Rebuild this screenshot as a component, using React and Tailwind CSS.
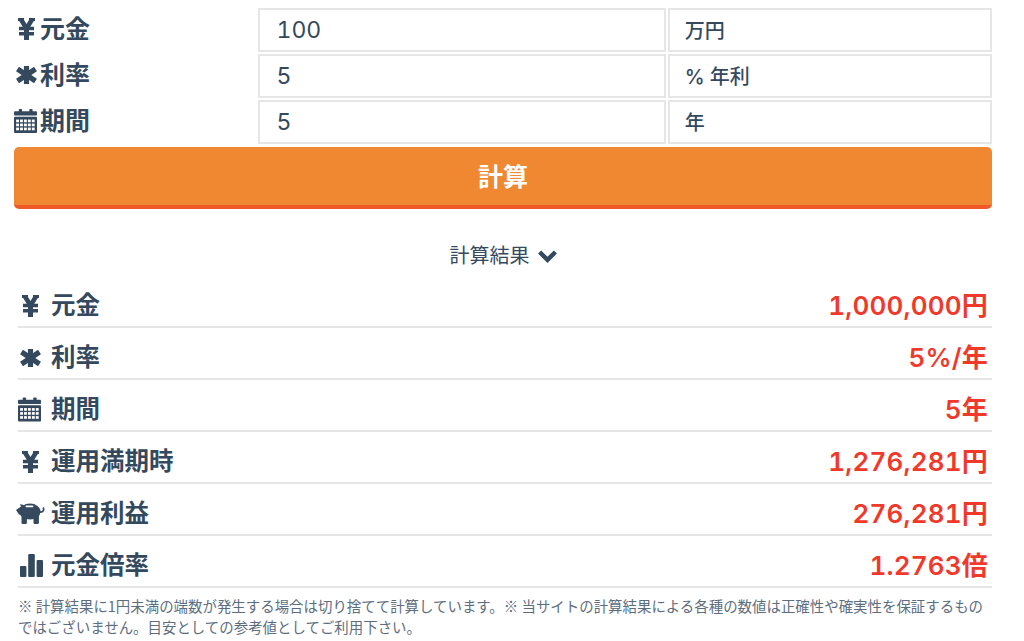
const FONT = "font-['Inter','Noto_Sans_CJK_JP',sans-serif]";

function YenIcon({ className }) {
  return (
    <svg viewBox="0 0 17 22" className={className} fill="none" stroke="currentColor">
      <path d="M0 1.5H6M11 1.5H17" strokeWidth="3" />
      <path d="M3 1.5L8.5 10.5L14 1.5" strokeWidth="4.6" />
      <path d="M8.5 10V22" strokeWidth="5" />
      <path d="M1 10.5H16M1 15.7H16" strokeWidth="3.4" />
    </svg>
  );
}

function AsteriskIcon({ className }) {
  return (
    <svg viewBox="0 0 21 18" className={className} fill="none" stroke="currentColor" strokeWidth="5.2">
      <path d="M10.5 0V18" />
      <path d="M1.5 3L19.5 15" />
      <path d="M19.5 3L1.5 15" />
    </svg>
  );
}

function CalendarIcon({ className }) {
  const cells = [];
  for (let r = 0; r < 3; r++) {
    for (let c = 0; c < 5; c++) {
      cells.push(<rect key={r + "-" + c} x={2.2 + c * 4.1} y={11 + r * 4.2} width="3" height="2.8" fill="#fff" />);
    }
  }
  return (
    <svg viewBox="0 0 24 25" className={className} fill="currentColor">
      <rect x="5" y="0" width="3.4" height="4" rx="0.8" />
      <rect x="16" y="0" width="3.4" height="4" rx="0.8" />
      <rect x="0" y="2.4" width="24" height="4.4" rx="1" />
      <rect x="0" y="8" width="24" height="17" rx="1" />
      {cells}
    </svg>
  );
}

function PiggyIcon({ className }) {
  return (
    <svg viewBox="0 0 29 21" className={className} fill="currentColor">
      <ellipse cx="14" cy="8.6" rx="10.6" ry="8" />
      <path d="M0 7L5 3.5L6.5 12.5L3 11.5Z" />
      <path d="M4 1L9 2.5L6 6Z" />
      <rect x="5.5" y="12" width="5.4" height="9" rx="1.2" />
      <rect x="17.5" y="12" width="5.4" height="9" rx="1.2" />
      <path d="M24 9C27.5 9.4 28.4 6.4 27 4.6" fill="none" stroke="currentColor" strokeWidth="1.7" />
      <rect x="9.5" y="2.6" width="8" height="1.7" rx="0.8" fill="#fff" />
    </svg>
  );
}

function BarsIcon({ className }) {
  return (
    <svg viewBox="0 0 23 23" className={className} fill="currentColor">
      <rect x="0" y="12" width="6.4" height="11" rx="1" />
      <rect x="8.2" y="0" width="6.6" height="23" rx="1.2" />
      <rect x="16.6" y="6" width="6.4" height="17" rx="1" />
    </svg>
  );
}

function ChevronIcon({ className }) {
  return (
    <svg viewBox="0 0 19 14" className={className} fill="none" stroke="currentColor" strokeWidth="4.4">
      <path d="M1.6 3L9.5 10.8L17.4 3" />
    </svg>
  );
}

const inputs = [
  { icon: <YenIcon className="w-[17px] h-[22px] ml-[4px]" />, label: "元金", value: "100", unit: "万円" },
  { icon: <AsteriskIcon className="w-[21px] h-[18px] ml-[2px]" />, label: "利率", value: "5", unit: "% 年利" },
  { icon: <CalendarIcon className="w-[23px] h-[26px]" />, label: "期間", value: "5", unit: "年" },
];

const results = [
  { icon: <YenIcon className="w-[17px] h-[22px] ml-[4px]" />, label: "元金", value: "1,000,000円" },
  { icon: <AsteriskIcon className="w-[21px] h-[18px] ml-[2px]" />, label: "利率", value: "5%/年" },
  { icon: <CalendarIcon className="w-[23px] h-[25px]" />, label: "期間", value: "5年" },
  { icon: <YenIcon className="w-[17px] h-[22px] ml-[4px]" />, label: "運用満期時", value: "1,276,281円" },
  { icon: <PiggyIcon className="w-[29px] h-[21px] -ml-[2px] shrink-0" />, label: "運用利益", value: "276,281円" },
  { icon: <BarsIcon className="w-[23px] h-[23px] ml-[2px]" />, label: "元金倍率", value: "1.2763倍" },
];

export default function App() {
  return (
    <div className={`${FONT} w-[1024px] h-[641px] overflow-hidden bg-white text-[#34495e] pl-[14px] pr-[32px] pt-[8px]`}>
      <div className="flex flex-col gap-[2.5px]">
        {inputs.map((row) => (
          <div key={row.label} className="flex gap-[2px] h-[43.5px]">
            <div className="w-[243px] flex items-start text-[25px] font-semibold leading-[42px]">
              <span className="w-[26px] h-[42px] flex items-center justify-start">{row.icon}</span>
              <span>{row.label}</span>
            </div>
            <input
              readOnly
              value={row.value}
              className="w-[408px] border-2 border-[#e6e6e6] px-[16px] text-[23px] font-normal tabular-nums outline-none"
            />
            <div className="w-[325px] border-2 border-[#e6e6e6] px-[15px] pt-[3px] flex items-center text-[20px] font-medium">{row.unit}</div>
          </div>
        ))}
      </div>
      <button
        type="button"
        className="block w-full h-[62.5px] mt-[3px] pt-[3px] rounded-[5px] bg-[#f08832] border-b-4 border-[#f05a28] text-white text-[25px] font-bold"
      >
        計算
      </button>
      <div className="h-[26px] mt-[34px] flex items-center justify-center gap-[8px] text-[20px]">
        計算結果
        <ChevronIcon className="w-[19px] h-[14px]" />
      </div>
      <div className="w-[974px] ml-[4px] mt-[7px]">
        {results.map((row) => (
          <div key={row.value} className="h-[52px] border-b-2 border-[#e6e6e6] flex items-center justify-between text-[24.5px] font-semibold pt-[9px] pr-[4px]">
            <div className="flex items-center">
              <span className="w-[33px] flex items-center justify-start">{row.icon}</span>
              <span>{row.label}</span>
            </div>
            <span className="text-[#f1392b] text-[26px] tracking-[0.2px] font-semibold tabular-nums">{row.value}</span>
          </div>
        ))}
      </div>
      <p className="w-[978px] pl-[4px] mt-[7px] text-[14.45px] leading-[21px] text-[#5d6d7e] font-['Noto_Sans_CJK_JP',sans-serif]">
        ※ 計算結果に1円未満の端数が発生する場合は切り捨てて計算しています。※ 当サイトの計算結果による各種の数値は正確性や確実性を保証するものではございません。目安としての参考値としてご利用下さい。
      </p>
    </div>
  );
}
